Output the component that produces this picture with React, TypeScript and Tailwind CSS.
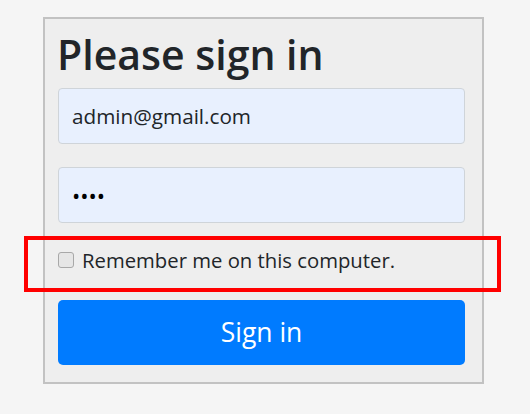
import React from 'react';

const font = { fontFamily: '"Open Sans", "Noto Sans", "Liberation Sans", sans-serif' };

export default function App() {
  return (
    <div className="relative w-[530px] h-[414px] bg-[#f5f5f5]" style={font}>
      <div className="pt-[17px] pl-[43px]">
        {/* Sign-in card */}
        <form
          className="w-[441px] h-[367px] bg-[#eeeeee] border-2 border-[#c2c2c2] pl-[13px] pr-[17px] flex flex-col"
          onSubmit={(e) => e.preventDefault()}
        >
          <h1 className="text-[41px] leading-[50px] font-semibold text-[#212529] mt-[10px] mb-[9px] -ml-[1px]">
            Please sign in
          </h1>
          <input
            type="email"
            defaultValue="admin@gmail.com"
            className="h-[56px] w-full rounded-[4px] border border-[#cfd4d9] bg-[#e8f0fe] px-[13px] text-[20.7px] text-[#212529] outline-none"
          />
          <input
            type="password"
            defaultValue="1234"
            className="mt-[23px] h-[56px] w-full rounded-[4px] border border-[#cfd4d9] bg-[#e8f0fe] px-[13px] text-[22px] text-black outline-none"
          />
          <label className="mt-[25px] h-[24px] flex items-center gap-[8px] text-[20.3px] text-[#212529]">
            <span className="w-[16px] h-[16px] rounded-[3px] border border-[#a8a8a8] bg-[#e6e6e6] shrink-0" />
            Remember me on this computer.
          </label>
          <button
            type="submit"
            className="mt-[28px] h-[65px] w-full rounded-[5px] bg-[#007bff] text-white text-[26.5px]"
          >
            Sign in
          </button>
        </form>
      </div>

      {/* annotation highlight */}
      <div className="absolute left-[24px] top-[236px] w-[477px] h-[56px] border-4 border-[#ff0000] pointer-events-none" />
    </div>
  );
}
